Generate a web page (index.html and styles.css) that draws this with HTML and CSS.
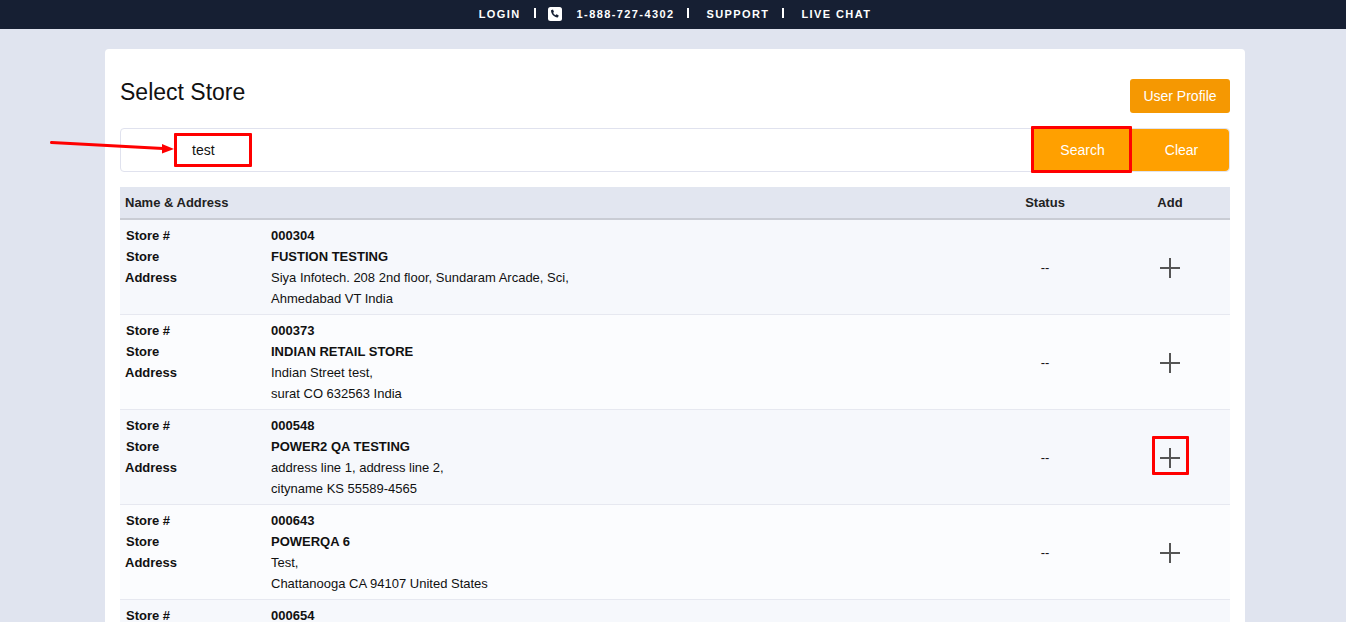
FILE: index.html
```html
<!DOCTYPE html>
<html lang="en">
<head>
<meta charset="utf-8">
<title>Select Store</title>
<link rel="stylesheet" href="styles.css">
</head>
<body>
<header class="topbar">
  <a class="top-link">LOGIN</a>
  <span class="sep first"></span>
  <svg class="phone" viewBox="0 0 14 14" width="14" height="14"><rect width="14" height="14" rx="2.5" fill="#fff"/><path d="M3.6 2.9 5 2.6l1 2.3-.9.8c.5 1.1 1.3 1.9 2.4 2.5l.8-.9 2.3 1-.3 1.5c-.1.4-.4.6-.8.6C6.200 10.300 3 7.300 3 3.600c0-.3.200-.6.600-.7z" fill="#161f33"/></svg>
  <a class="top-link">1-888-727-4302</a>
  <span class="sep wide"></span>
  <a class="top-link">SUPPORT</a>
  <span class="sep wide"></span>
  <a class="top-link">LIVE CHAT</a>
</header>

<main class="card">
  <div class="title-row">
    <h1>Select Store</h1>
    <button class="btn profile">User Profile</button>
  </div>

  <div class="search">
    <div class="search-field">
      <span class="search-text mark">test</span>
    </div>
    <button class="btn action mark search-btn">Search</button>
    <button class="btn action clear-btn">Clear</button>
  </div>
  <svg class="arrow" width="130" height="20" viewBox="0 0 130 20"><path d="M1.500 2.500 113 8.500" stroke="#f00" stroke-width="3" stroke-linecap="round" fill="none"/><path d="M124 9 112 4v9.500z" fill="#f00"/></svg>

  <div class="table">
    <div class="row head">
      <div class="cell-name">Name &amp; Address</div>
      <div class="cell-status">Status</div>
      <div class="cell-add">Add</div>
    </div>

    <div class="row store odd">
      <div class="cell-name info">
        <b>Store #</b><b class="val">000304</b>
        <b>Store</b><b class="val">FUSTION TESTING</b>
        <b class="addr">Address</b><span class="val">Siya Infotech. 208 2nd floor, Sundaram Arcade, Sci,<br>Ahmedabad VT India</span>
      </div>
      <div class="cell-status">--</div>
      <div class="cell-add"><svg class="plus" viewBox="0 0 20 20" width="20" height="20"><path d="M10 0v20M0 10h20" stroke="#555" stroke-width="2"/></svg></div>
    </div>

    <div class="row store">
      <div class="cell-name info">
        <b>Store #</b><b class="val">000373</b>
        <b>Store</b><b class="val">INDIAN RETAIL STORE</b>
        <b class="addr">Address</b><span class="val">Indian Street test,<br>surat CO 632563 India</span>
      </div>
      <div class="cell-status">--</div>
      <div class="cell-add"><svg class="plus" viewBox="0 0 20 20" width="20" height="20"><path d="M10 0v20M0 10h20" stroke="#555" stroke-width="2"/></svg></div>
    </div>

    <div class="row store odd">
      <div class="cell-name info">
        <b>Store #</b><b class="val">000548</b>
        <b>Store</b><b class="val">POWER2 QA TESTING</b>
        <b class="addr">Address</b><span class="val">address line 1, address line 2,<br>cityname KS 55589-4565</span>
      </div>
      <div class="cell-status">--</div>
      <div class="cell-add"><span class="plus-mark"><svg class="plus" viewBox="0 0 20 20" width="20" height="20"><path d="M10 0v20M0 10h20" stroke="#555" stroke-width="2"/></svg></span></div>
    </div>

    <div class="row store">
      <div class="cell-name info">
        <b>Store #</b><b class="val">000643</b>
        <b>Store</b><b class="val">POWERQA 6</b>
        <b class="addr">Address</b><span class="val">Test,<br>Chattanooga CA 94107 United States</span>
      </div>
      <div class="cell-status">--</div>
      <div class="cell-add"><svg class="plus" viewBox="0 0 20 20" width="20" height="20"><path d="M10 0v20M0 10h20" stroke="#555" stroke-width="2"/></svg></div>
    </div>

    <div class="row store odd">
      <div class="cell-name info">
        <b>Store #</b><b class="val">000654</b>
        <b>Store</b><b class="val">POWERQA 7</b>
        <b class="addr">Address</b><span class="val">Test,<br>Chattanooga CA 94107 United States</span>
      </div>
      <div class="cell-status">--</div>
      <div class="cell-add"><svg class="plus" viewBox="0 0 20 20" width="20" height="20"><path d="M10 0v20M0 10h20" stroke="#555" stroke-width="2"/></svg></div>
    </div>
  </div>
</main>
</body>
</html>
```
FILE: styles.css
```css
* { box-sizing: border-box; }
html, body { margin: 0; height: 622px; overflow: hidden; }
body {
  background: #e0e4ef;
  font-family: "Liberation Sans", Arial, sans-serif;
  color: #111;
}
.topbar {
  height: 29px;
  background: #161f33;
  display: flex;
  align-items: center;
  justify-content: center;
  padding: 0 0 2px 4px;
}
.top-link {
  color: #fff;
  font-size: 11px;
  font-weight: 700;
  letter-spacing: 1.4px;
}
.sep { width: 2px; height: 10px; background: #fff; margin: 0 13px 1px 13px; }
.sep.first { margin-right: 12px; }
.sep.wide { margin-right: 17px; }
.phone { margin: 0 15px 0 0; }
.card {
  position: relative;
  width: 1140px;
  height: 640px;
  margin: 20px 0 0 105px;
  padding: 30px 15px 0;
  background: #fff;
  border-radius: 4px 4px 0 0;
}
.title-row {
  display: flex;
  justify-content: space-between;
  height: 49px;
}
h1 {
  margin: 0;
  font-size: 23px;
  font-weight: 400;
  line-height: 26px;
  color: #111;
}
.btn {
  border: 0;
  color: #fff;
  font-family: inherit;
  font-size: 14px;
  padding: 0;
}
.profile {
  width: 100px;
  height: 34px;
  background: #f59802;
  border-radius: 3px;
}
.search {
  display: flex;
  height: 44px;
  border: 1px solid #e0e2ee;
  border-radius: 4px;
  background: #fff;
}
.search-field {
  flex: 1;
  padding: 4px 0 0 53px;
}
.search-text {
  display: block;
  width: 78px;
  height: 34px;
  padding-left: 15px;
  font-size: 14px;
  line-height: 28px;
}
.mark { border: 3px solid #f00; border-radius: 1px; }
.action {
  background: #ffa000;
  width: 97px;
  padding-left: 2px;
}
.search-btn {
  width: 101px;
  height: 47px;
  margin: -3px 0 0;
  position: relative;
}
.clear-btn { border-radius: 0 4px 4px 0; }
.arrow { position: absolute; left: -55px; top: 91px; }
.table { margin-top: 15px; font-size: 13px; }
.row { display: flex; align-items: center; }
.head {
  height: 33px;
  background: #e2e6f0;
  border-bottom: 2px solid #c9ccd4;
  font-weight: 700;
  color: #222;
}
.head .cell-name { padding-left: 5px; }
.cell-name { width: 880px; }
.cell-status { width: 90px; text-align: center; }
.cell-add { width: 140px; padding-left: 20px; text-align: center; }
.store {
  height: 95px;
  background: #fbfcfe;
  border-bottom: 1px solid #e6e8f0;
}
.store.odd { background: #f6f8fc; }
.info {
  display: grid;
  grid-template-columns: 146px 1fr;
  line-height: 21px;
  padding-left: 5px;
}
.info b:not(.val, .addr) { padding-left: 1px; }
.plus { display: block; margin: 2px auto 0; }
.plus-mark {
  display: block;
  width: 37px;
  height: 39px;
  margin: -3px auto 0;
  padding-top: 7px;
  border: 3px solid #f00;
  border-radius: 1px;
}
```
